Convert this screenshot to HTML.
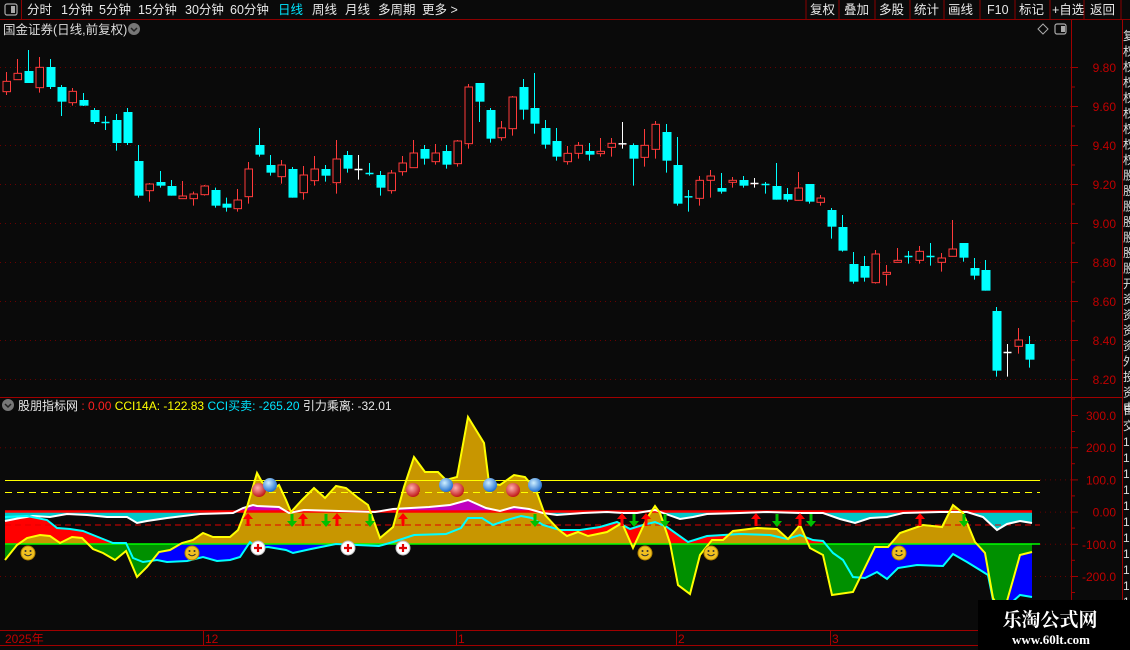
<!DOCTYPE html>
<html><head><meta charset="utf-8">
<style>
html,body{margin:0;padding:0;background:#0a0a0a;width:1130px;height:650px;overflow:hidden;}
body{font-family:"Liberation Sans","Noto Sans CJK SC",sans-serif;}
svg{position:absolute;left:0;top:0;}
</style></head>
<body>
<svg id="s" width="1130" height="650" xmlns="http://www.w3.org/2000/svg" font-family="Liberation Sans, Noto Sans CJK SC, sans-serif">
<rect width="1130" height="650" fill="#0a0a0a"/>
<g id="g"></g>
<!-- top bar -->
<line x1="0" y1="19.5" x2="1130" y2="19.5" stroke="#8b0000"/>
<line x1="21.5" y1="0" x2="21.5" y2="19" stroke="#8b0000"/>
<rect x="5" y="4" width="12" height="11" rx="2" fill="none" stroke="#aaa" stroke-width="1.2"/>
<rect x="11" y="6" width="4" height="7" fill="#aaa"/>
<g font-size="12.5" fill="#e8e8e8">
<text x="27" y="14">分时</text><text x="61" y="14">1分钟</text><text x="99" y="14">5分钟</text>
<text x="138" y="14">15分钟</text><text x="185" y="14">30分钟</text><text x="230" y="14">60分钟</text>
<text x="278" y="14" fill="#00e5ff">日线</text><text x="312" y="14">周线</text><text x="345" y="14">月线</text>
<text x="378" y="14">多周期</text><text x="422" y="14">更多 &gt;</text>
<text x="810" y="14">复权</text><text x="844" y="14">叠加</text><text x="879" y="14">多股</text>
<text x="914" y="14">统计</text><text x="948" y="14">画线</text><text x="987" y="14">F10</text>
<text x="1019" y="14">标记</text><text x="1052" y="14">+自选</text><text x="1090" y="14">返回</text>
</g>
<g stroke="#8b0000"><line x1="806" y1="0" x2="806" y2="19"/><line x1="839" y1="0" x2="839" y2="19"/><line x1="875" y1="0" x2="875" y2="19"/><line x1="910" y1="0" x2="910" y2="19"/><line x1="944" y1="0" x2="944" y2="19"/><line x1="980" y1="0" x2="980" y2="19"/><line x1="1015" y1="0" x2="1015" y2="19"/><line x1="1050" y1="0" x2="1050" y2="19"/><line x1="1084" y1="0" x2="1084" y2="19"/><line x1="1121" y1="0" x2="1121" y2="19"/></g>
<!-- title row -->
<text x="3" y="34" font-size="12.5" fill="#dcdcdc">国金证券(日线,前复权)</text>
<circle cx="134" cy="29" r="6" fill="#777"/><path d="M131 28 l3 3 l3 -3" stroke="#222" stroke-width="1.5" fill="none"/>
<path d="M1043 24 l5 5 l-5 5 l-5 -5z" fill="none" stroke="#aaa"/>
<rect x="1055" y="24" width="11" height="10" rx="2" fill="none" stroke="#aaa" stroke-width="1.2"/><rect x="1061" y="26" width="4" height="6" fill="#aaa"/>
<!-- axis frame -->
<line x1="1071.5" y1="20" x2="1071.5" y2="630" stroke="#a00000"/>
<line x1="1122.5" y1="20" x2="1122.5" y2="650" stroke="#a00000"/>
<line x1="0" y1="397.5" x2="1122" y2="397.5" stroke="#a00000"/>
<line x1="0" y1="630.5" x2="1130" y2="630.5" stroke="#a00000"/>
<line x1="0" y1="645.5" x2="1130" y2="645.5" stroke="#a00000"/>
<g font-size="12" fill="#c00000" text-anchor="end" id="axl"></g>
<!-- right strip chars -->
<g font-size="12" fill="#ddd" id="strip"></g>
<!-- indicator header -->
<circle cx="8" cy="405" r="6" fill="#777"/><path d="M5 404 l3 3 l3 -3" stroke="#222" stroke-width="1.5" fill="none"/>
<text x="18" y="410" font-size="12" fill="#e8e8e8">股朋指标网 <tspan fill="#ff2020">: 0.00</tspan> <tspan fill="#ffff00">CCI14A: -122.83</tspan> <tspan fill="#00e5ff">CCI买卖: -265.20</tspan> <tspan fill="#e8e8e8">引力乘离: -32.01</tspan></text>
<!-- date axis -->
<g font-size="12" fill="#c00000"><text x="5" y="643">2025年</text><text x="205" y="643">12</text><text x="458" y="643">1</text><text x="678" y="643">2</text><text x="832" y="643">3</text></g>
<g stroke="#a00000"><line x1="203.5" y1="630" x2="203.5" y2="645"/><line x1="456.5" y1="630" x2="456.5" y2="645"/><line x1="676.5" y1="630" x2="676.5" y2="645"/><line x1="830.5" y1="630" x2="830.5" y2="645"/></g>
<!-- watermark -->
<rect x="978" y="600" width="152" height="50" fill="#000"/>
<text x="1050" y="626" font-size="19" font-weight="bold" fill="#fff" text-anchor="middle" font-family="Liberation Serif, Noto Serif CJK SC, serif">乐淘公式网</text>
<text x="1051" y="644" font-size="13" font-weight="bold" fill="#fff" text-anchor="middle" font-family="Liberation Serif, serif">www.60lt.com</text>
</svg>
<script>
var NS="http://www.w3.org/2000/svg",G=document.getElementById('g');
function el(t,a,p){var e=document.createElementNS(NS,t);for(var k in a)e.setAttribute(k,a[k]);(p||G).appendChild(e);return e;}
// grid
var prices=['9.80','9.60','9.40','9.20','9.00','8.80','8.60','8.40','8.20'];
var axl=document.getElementById('axl');
prices.forEach(function(p,i){var y=67+i*39;el('line',{x1:0,y1:y+.5,x2:1071,y2:y+.5,stroke:'#6a0000','stroke-dasharray':'1 4'});
el('line',{x1:1071,y1:y+.5,x2:1078,y2:y+.5,stroke:'#a00000'});el('line',{x1:1071,y1:y+20,x2:1075,y2:y+20,stroke:'#a00000'});
var t=el('text',{x:1116,y:y+5},axl);t.textContent=p;});
var iv=['300.0','200.0','100.0','0.00','-100.0','-200.0'];
iv.forEach(function(p,i){var y=415+i*32.2;
if(i!=2&&i!=3&&i!=4&&i!=0)el('line',{x1:0,y1:y+.5,x2:1071,y2:y+.5,stroke:'#6a0000','stroke-dasharray':'1 4'});
if(i==2||i==3||i==4)el('line',{x1:1040,y1:y+.5,x2:1071,y2:y+.5,stroke:'#6a0000','stroke-dasharray':'1 4'});
el('line',{x1:1071,y1:y+.5,x2:1078,y2:y+.5,stroke:'#a00000'});el('line',{x1:1071,y1:y+16.5,x2:1075,y2:y+16.5,stroke:'#a00000'});
var t=el('text',{x:1116,y:y+5},axl);t.textContent=p;});
var st=document.getElementById('strip');
'复权权权权权权权权股股股股股股股开资资资资外投资申'.split('').forEach(function(c,i){var t=el('text',{x:1123,y:40+i*15.5},st);t.textContent=c;});
'自交11111111111'.split('').forEach(function(c,i){var t=el('text',{x:1123,y:414+i*16},st);t.textContent=c;});
// candles
var A=[[66,135,94,125,'r'],[27,90,70,89,'r'],[0,99,63,99,'c'],[21,128,52,113,'r'],[27,117,51,111,'c'],[105,198,111,155,'c'],[114,167,124,158,'r'],[129,168,150,167,'c'],[174,222,180,216,'c'],[198,240,216,221,'c'],[192,302,210,279,'c'],[174,285,186,279,'c'],[285,443,333,437,'c'],[399,455,402,422,'r'],[363,413,396,407,'c'],[390,437,408,437,'c'],[393,446,438,446,'r'],[425,467,432,446,'r'],[405,437,408,434,'r'],[413,473,420,467,'c'],[443,485,461,473,'c'],[417,485,450,476,'r'],[336,461,357,440,'r'],[234,320,285,314,'c'],[315,377,345,368,'c'],[330,401,345,380,'r'],[351,443,357,443,'c'],[348,449,375,428,'r'],[318,407,357,392,'r'],[345,395,357,377,'c'],[270,431,327,398,'r'],[303,368,315,356,'c'],[315,389,357,359,'w'],[339,377,369,374,'c'],[363,437,375,413,'c'],[360,431,369,422,'r'],[318,377,339,365,'r'],[270,353,309,353,'r'],[285,344,297,326,'c'],[282,344,309,335,'r'],[285,356,303,344,'c'],[270,350,273,341,'r'],[102,296,111,281,'r'],[99,216,99,155,'c'],[174,278,180,266,'c'],[213,272,234,263,'r'],[138,257,141,236,'r'],[87,209,111,179,'c'],[69,251,174,221,'c']];
var B=[[30,116,54,104,'c'],[54,152,93,140,'c'],[108,164,130,155,'r'],[96,146,106,130,'r'],[99,152,123,134,'c'],[84,140,124,131,'r'],[84,140,100,112,'r'],[36,116,100,101,'w'],[100,227,105,146,'c'],[57,170,106,142,'r'],[33,146,43,118,'r'],[42,188,66,152,'c'],[81,287,165,281,'c'],[240,305,259,262,'c'],[198,287,211,265,'r'],[180,263,198,211,'r'],[189,251,234,245,'c'],[201,233,211,217,'r'],[198,233,210,227,'c'],[204,233,219,220,'w'],[216,251,222,227,'c'],[159,269,228,269,'c'],[234,275,252,269,'c'],[186,272,234,271,'r'],[222,281,222,275,'c'],[255,287,264,277,'r'],[294,386,300,350,'c'],[315,425,351,422,'c'],[426,521,462,515,'c'],[438,515,468,503,'c'],[420,521,432,518,'r'],[465,527,487,493,'r'],[414,458,451,457,'r'],[423,461,438,442,'c'],[408,461,424,451,'r'],[399,467,438,442,'c'],[429,485,444,457,'r'],[330,440,417,439,'r'],[399,455,399,443,'c'],[444,509,474,497,'c'],[450,542,480,542,'c'],[591,800,603,782,'c'],[702,800,726,728,'w'],[654,731,690,709,'r'],[678,773,702,749,'c']];
function candle(x,c,oy){var wt=oy+c[0]/3,wb=oy+c[1]/3,bt=oy+c[2]/3,bb=oy+c[3]/3;
var col=c[4]=='r'?'#ff3a3a':c[4]=='c'?'#00ffff':'#ffffff';
el('line',{x1:x,y1:wt,x2:x,y2:wb,stroke:col});
if(bb-bt<2){el('line',{x1:x-4,y1:bt+.5,x2:x+4,y2:bt+.5,stroke:col,'stroke-width':1.5});}
else if(c[4]=='r'){el('rect',{x:x-3.5,y:bt,width:7.5,height:bb-bt,fill:'#0a0a0a',stroke:col});}
else el('rect',{x:x-4,y:bt,width:9,height:bb-bt,fill:col});}
A.forEach(function(c,i){candle(Math.round(5.5+11*i)+.5,c,50);});
B.forEach(function(c,i){candle(Math.round(545+11*i)+.5,c,110);});
// indicator
var Y=[[5,560],[17,545],[27,538],[40,535],[50,536],[60,543],[72,537],[82,538],[93,549],[103,553],[115,560],[126,551],[137,577],[147,567],[159,552],[170,550],[182,543],[193,540],[203,533],[213,537],[230,537],[238,530],[247,507],[257,473],[262,482],[271,490],[279,485],[286,500],[291,512],[302,500],[314,488],[325,498],[336,486],[346,488],[357,497],[368,505],[380,538],[393,527],[404,487],[414,457],[425,472],[438,472],[446,480],[457,477],[468,417],[484,443],[489,483],[500,485],[514,475],[525,477],[536,490],[545,515],[559,530],[567,536],[578,532],[588,536],[607,532],[622,523],[633,548],[647,518],[655,506],[660,513],[670,543],[678,585],[690,594],[700,555],[712,540],[723,540],[733,531],[757,528],[777,529],[788,539],[800,525],[810,548],[823,555],[832,595],[853,592],[875,547],[888,547],[900,533],[923,525],[942,527],[953,505],[963,513],[975,542],[985,553],[993,598],[1003,615],[1013,580],[1020,555],[1032,552]];
var C=[[5,517],[27,516],[37,518],[47,520],[57,528],[70,529],[83,531],[93,535],[103,539],[113,543],[126,543],[133,558],[143,562],[157,560],[167,562],[187,561],[203,557],[217,561],[230,560],[240,557],[250,542],[258,548],[268,547],[286,550],[293,553],[311,549],[336,544],[357,545],[379,546],[393,542],[414,535],[446,534],[461,528],[468,518],[482,518],[493,525],[507,520],[521,516],[532,518],[543,525],[560,530],[580,530],[600,527],[617,522],[630,529],[643,525],[655,522],[667,527],[688,542],[707,536],[740,534],[770,535],[787,539],[800,535],[813,540],[823,541],[833,553],[843,560],[853,577],[865,578],[877,572],[887,579],[898,568],[917,565],[943,566],[953,554],[967,562],[980,570],[988,575],[993,600],[1003,610],[1020,595],[1032,597]];
var W=[[5,521],[20,518],[33,516],[50,517],[67,514],[87,515],[107,517],[127,517],[137,523],[147,521],[167,518],[200,514],[233,513],[243,508],[253,505],[257,506],[279,507],[289,513],[304,510],[339,511],[375,512],[393,509],[429,507],[450,505],[468,500],[486,508],[500,511],[514,507],[529,509],[543,513],[557,515],[583,513],[607,512],[623,513],[637,513],[655,510],[663,513],[680,519],[693,517],[707,514],[740,513],[767,512],[800,513],[823,513],[840,519],[855,523],[870,518],[887,517],[903,513],[940,512],[967,512],[983,517],[997,530],[1007,524],[1020,521],[1032,523]];
function pts(a){return a.map(function(p){return p[0]+','+p[1];}).join(' ');}
function rev(a){return a.slice().reverse();}
var defs=el('defs',{});
function clip(id,y1,y2){var c=el('clipPath',{id:id},defs);el('rect',{x:0,y:y1,width:1040,height:y2-y1},c);}
clip('above',0,544);clip('below',544,630);clip('ab512',0,512);clip('bl512',512,630);
var ybase=[[1032,544],[5,544]];
el('polygon',{points:pts(C.concat(rev(Y))),fill:'#ff0000','clip-path':'url(#above)'});
el('polygon',{points:pts(Y.concat(ybase)),fill:'#c89600','clip-path':'url(#above)'});
el('polygon',{points:pts(C.concat(ybase)),fill:'#0000ff','clip-path':'url(#below)'});
el('polygon',{points:pts(Y.concat(ybase)),fill:'#009000','clip-path':'url(#below)'});
el('polygon',{points:pts(W.concat([[1032,512],[5,512]])),fill:'#00c8c8','clip-path':'url(#bl512)'});
el('polygon',{points:pts(W.concat([[1032,512],[5,512]])),fill:'#c000c0','clip-path':'url(#ab512)'});
el('line',{x1:5,y1:511.5,x2:1032,y2:511.5,stroke:'#ff0000','stroke-width':2.5});
el('line',{x1:5,y1:525,x2:1040,y2:525,stroke:'#e00000','stroke-dasharray':'6 4'});
el('line',{x1:5,y1:544,x2:1040,y2:544,stroke:'#00ff00','stroke-width':1.5});
el('line',{x1:5,y1:480.5,x2:1040,y2:480.5,stroke:'#ffff00'});
el('line',{x1:5,y1:492.5,x2:1040,y2:492.5,stroke:'#ffff00','stroke-dasharray':'7 5'});
el('polyline',{points:pts(W),fill:'none',stroke:'#fff','stroke-width':2});
el('polyline',{points:pts(C),fill:'none',stroke:'#00ffff','stroke-width':2});
el('polyline',{points:pts(Y),fill:'none',stroke:'#ffff00','stroke-width':2});
// arrows
[248,303,337,403,622,646,756,800,920].forEach(function(x){el('path',{d:'M'+x+' 513 l-5 6 h3.5 v7 h3 v-7 h3.5z',fill:'#ff0000'});});
[292,326,370,535,634,665,777,811,964].forEach(function(x){el('path',{d:'M'+x+' 527 l-5 -6 h3.5 v-7 h3 v7 h3.5z',fill:'#00c000'});});
// balls
var gd=el('radialGradient',{id:'rb',cx:'40%',cy:'35%',r:'65%'},defs);el('stop',{offset:'0','stop-color':'#ffb0b0'},gd);el('stop',{offset:'1','stop-color':'#c01818'},gd);
var gb=el('radialGradient',{id:'bb',cx:'40%',cy:'35%',r:'65%'},defs);el('stop',{offset:'0','stop-color':'#d0f0ff'},gb);el('stop',{offset:'1','stop-color':'#2070d0'},gb);
[[259,490],[413,490],[457,490],[513,490]].forEach(function(p){el('circle',{cx:p[0],cy:p[1],r:7,fill:'url(#rb)'});});
[[270,485],[446,485],[490,485],[535,485]].forEach(function(p){el('circle',{cx:p[0],cy:p[1],r:7,fill:'url(#bb)'});});
[258,348,403].forEach(function(x){el('circle',{cx:x,cy:548,r:7,fill:'#fff',stroke:'#bbb'});el('path',{d:'M'+(x-4)+' 548 h8 M'+x+' 544 v8',stroke:'#e00000','stroke-width':2.2});});
[28,192,645,711,899].forEach(function(x){el('circle',{cx:x,cy:553,r:7,fill:'#f0c020',stroke:'#b08000'});
el('circle',{cx:x-2.5,cy:551,r:1,fill:'#333'});el('circle',{cx:x+2.5,cy:551,r:1,fill:'#333'});
el('path',{d:'M'+(x-3.5)+' 554 q3.5 3.5 7 0',stroke:'#333',fill:'none','stroke-width':1});});
</script>
</body></html>
